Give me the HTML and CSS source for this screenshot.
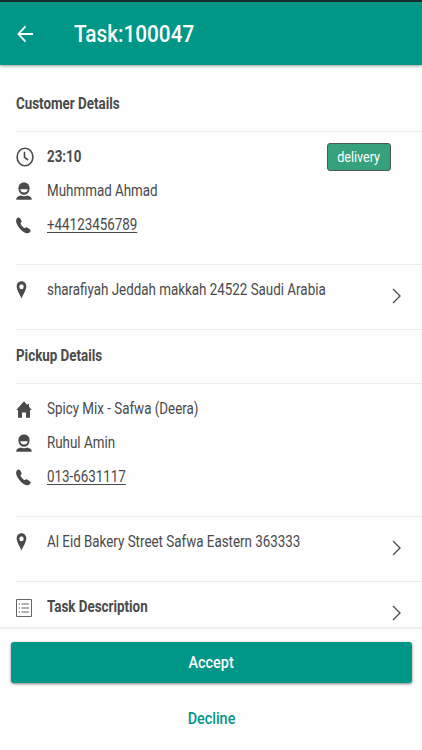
FILE: index.html
```html
<!DOCTYPE html>
<html lang="en">
<head>
    <meta charset="UTF-8">
    <meta name="viewport" content="width=device-width, initial-scale=1.0">
    <title>Task:100047</title>
    <link rel="stylesheet" href="styles.css">
</head>
<body>
    <!-- shared icons -->
    <svg class="sprite">
        <symbol id="user" viewBox="0 0 16 18">
            <path d="M2.400 6.200C2.400 2.600 4.700.4 8 .4s5.600 2.200 5.600 5.800c0 3.600-2.500 6.600-5.600 6.600S2.400 9.800 2.400 6.200z"/>
            <path d="M4.200 7.200h7.600c-.5 2.200-1.900 3.200-3.800 3.200s-3.300-1-3.800-3.200z" fill="#fefefe"/>
            <path d="M.2 17.800c0-2.200 1.200-3.500 4.400-4.200 2 1 4.800 1 6.800 0 3.200.7 4.400 2 4.400 4.200z"/>
        </symbol>
        <symbol id="phone" viewBox="0 0 15 17">
            <path d="M1 1.200C2.200 0 3.400.2 4.100 1.300l1.200 2.100c.6 1.100.3 1.900-.6 2.700-.4.500.2 1.500 1.300 2.800s2.300 2.300 2.900 2.200c.9-.8 1.700-1 2.600-.4l2.300 1.500c1.100.8 1.100 2 0 3-1.400 1.500-3.800 1.300-6.200-.2C4.700 13.200 1.500 9.400.5 6.100-.2 3.900 0 2.300 1 1.200z"/>
        </symbol>
        <symbol id="pin" viewBox="0 0 10 18">
            <path fill-rule="evenodd" d="M5 .3c2.700 0 4.800 2.200 4.800 5.200C9.800 8.700 6.500 14 5 17.500 3.500 14 .2 8.700.2 5.500.2 2.500 2.300.3 5 .3zm0 3a2.200 2.500 0 1 0 0 5 2.200 2.500 0 1 0 0-5z"/>
        </symbol>
        <symbol id="chevron" viewBox="0 0 9 16">
            <path d="M1 1l7 7-7 7" fill="none" stroke="#4a4a4a" stroke-width="1.300"/>
        </symbol>
    </svg>

    <header class="toolbar">
        <svg class="back" viewBox="0 0 18 18"><path d="M17 9H1.500M9 1L1.500 9 9 17"/></svg>
        <h1><span class="condensed">Task:100047</span></h1>
    </header>

    <main class="content">
        <h2 class="section-title"><span class="condensed">Customer Details</span></h2>
        <section class="group">
            <div class="row">
                <svg class="icon clock" viewBox="0 0 18 20"><ellipse cx="9" cy="10" rx="7.900" ry="8.800"/><path d="M8.500 4.800v5.600l3.600 2.600"/></svg>
                <strong class="condensed">23:10</strong>
                <span class="badge"><span class="condensed">delivery</span></span>
            </div>
            <div class="row">
                <svg class="icon user"><use href="#user"/></svg>
                <span class="condensed">Muhmmad Ahmad</span>
            </div>
            <div class="row">
                <svg class="icon phone"><use href="#phone"/></svg>
                <a class="condensed" href="#">+44123456789</a>
            </div>
        </section>
        <section class="address">
            <svg class="icon pin"><use href="#pin"/></svg>
            <span class="condensed">sharafiyah Jeddah makkah 24522 Saudi Arabia</span>
            <svg class="chevron"><use href="#chevron"/></svg>
        </section>

        <h2 class="section-title pickup"><span class="condensed">Pickup Details</span></h2>
        <section class="group">
            <div class="row">
                <svg class="icon home" viewBox="0 0 16 17"><path d="M8 .2L.2 9h1.800v7.800h4v-5.300h4v5.300h4V9h1.800L13 5.800V3h-1.500v1.200z"/></svg>
                <span class="condensed">Spicy Mix - Safwa (Deera)</span>
            </div>
            <div class="row">
                <svg class="icon user"><use href="#user"/></svg>
                <span class="condensed">Ruhul Amin</span>
            </div>
            <div class="row">
                <svg class="icon phone"><use href="#phone"/></svg>
                <a class="condensed" href="#">013-6631117</a>
            </div>
        </section>
        <section class="address">
            <svg class="icon pin"><use href="#pin"/></svg>
            <span class="condensed">Al Eid Bakery Street Safwa Eastern 363333</span>
            <svg class="chevron"><use href="#chevron"/></svg>
        </section>
        <section class="address">
            <svg class="icon list" viewBox="0 0 16 18"><path d="M.5.500h15v17H.5zM5.500 5h7.500M5.500 9h7.500M5.500 13h7.500M2.700 5H4M2.700 9H4M2.700 13H4"/></svg>
            <strong class="condensed">Task Description</strong>
            <svg class="chevron"><use href="#chevron"/></svg>
        </section>
    </main>

    <footer class="actions">
        <button class="btn accept"><span class="condensed">Accept</span></button>
        <button class="btn decline"><span class="condensed">Decline</span></button>
    </footer>
</body>
</html>
```
FILE: styles.css
```css
* {
    margin: 0;
    padding: 0;
    box-sizing: border-box;
}

body {
    display: flex;
    flex-direction: column;
    height: 750px;
    overflow: hidden;
    font-family: Roboto, "Liberation Sans", sans-serif;
    font-size: 16px;
    line-height: 20px;
    color: #4a4a4a;
    background: #fefefe;
}

.sprite {
    display: none;
}

/* narrow text used everywhere in the app */
.condensed {
    display: inline-block;
    white-space: nowrap;
    transform: scaleX(0.836);
    transform-origin: left center;
}

.toolbar {
    display: flex;
    align-items: center;
    flex: none;
    height: 65px;
    margin-bottom: 1px;
    padding: 0 17px;
    border-top: 2px solid #15302e;
    background: #009688;
    box-shadow: 0 1px 3px rgba(0, 0, 0, 0.4);
    color: #fff;
    z-index: 1;
}

.toolbar h1 {
    margin-left: 40px;
    font-size: 24px;
    font-weight: 500;
    line-height: 30px;
}

.toolbar .condensed {
    transform: scaleX(0.865);
}

.back {
    width: 17px;
    height: 18px;
    fill: none;
    stroke: #fff;
    stroke-width: 1.9;
}

.content {
    flex: 1;
    min-height: 0;
    overflow: hidden;
    padding-left: 16px;
}

.section-title {
    height: 65px;
    padding-top: 28px;
    font-size: 16px;
    font-weight: 700;
}

.section-title.pickup {
    height: 54px;
    padding-top: 16px;
    border-top: 1px solid #ececec;
}

.group {
    height: 133px;
    padding-top: 8px;
    border-top: 1px solid #ececec;
}

.row {
    display: flex;
    align-items: center;
    height: 34px;
}

.icon {
    flex: none;
    fill: #4a4a4a;
}

.clock {
    width: 18px;
    height: 20px;
    margin: 0 13px 0 0;
    fill: none;
    stroke: #4a4a4a;
    stroke-width: 1.6;
}

.user {
    width: 16px;
    height: 18px;
    margin: 0 15px 0 0;
}

.phone {
    width: 15px;
    height: 17px;
    margin: 1px 16px 0 0;
}

.home {
    width: 16px;
    height: 17px;
    margin: 1px 15px 0 0;
}

.pin {
    width: 11px;
    height: 18px;
    margin: 1px 20px 0 0;
}

.list {
    width: 16px;
    height: 18px;
    margin: 2px 15px 0 0;
    fill: none;
    stroke: #666;
    stroke-width: 1;
}

a {
    color: inherit;
    text-underline-offset: 2px;
}

.badge {
    width: 64px;
    height: 28px;
    margin-left: auto;
    margin-right: 31px;
    border: 1px solid #4a5a52;
    border-radius: 3px;
    background: #36a27d;
    color: #fff;
    font-size: 15px;
    line-height: 26px;
    text-align: center;
}

.badge .condensed,
.btn .condensed {
    transform-origin: center;
}

.address {
    display: flex;
    height: 65px;
    padding-top: 15px;
    border-top: 1px solid #ececec;
}

.chevron {
    flex: none;
    width: 9px;
    height: 16px;
    margin: 8px 21.5px 0 auto;
}

.actions {
    flex: none;
    height: 123px;
    padding: 13px 10px 0 11px;
    border-top: 2px solid #eee;
    background: #fefefe;
}

.btn {
    display: block;
    width: 100%;
    border: 0;
    border-radius: 3px;
    background: none;
    font: 500 16px/40px Roboto, "Liberation Sans", sans-serif;
    color: #009688;
}

.btn .condensed {
    transform: scaleX(0.9);
}

.accept {
    height: 41px;
    background: #009688;
    box-shadow: 0 1px 3px rgba(0, 0, 0, 0.5);
    color: #fff;
    line-height: 38px;
}

.decline {
    margin-top: 16px;
    height: 40px;
}
```
